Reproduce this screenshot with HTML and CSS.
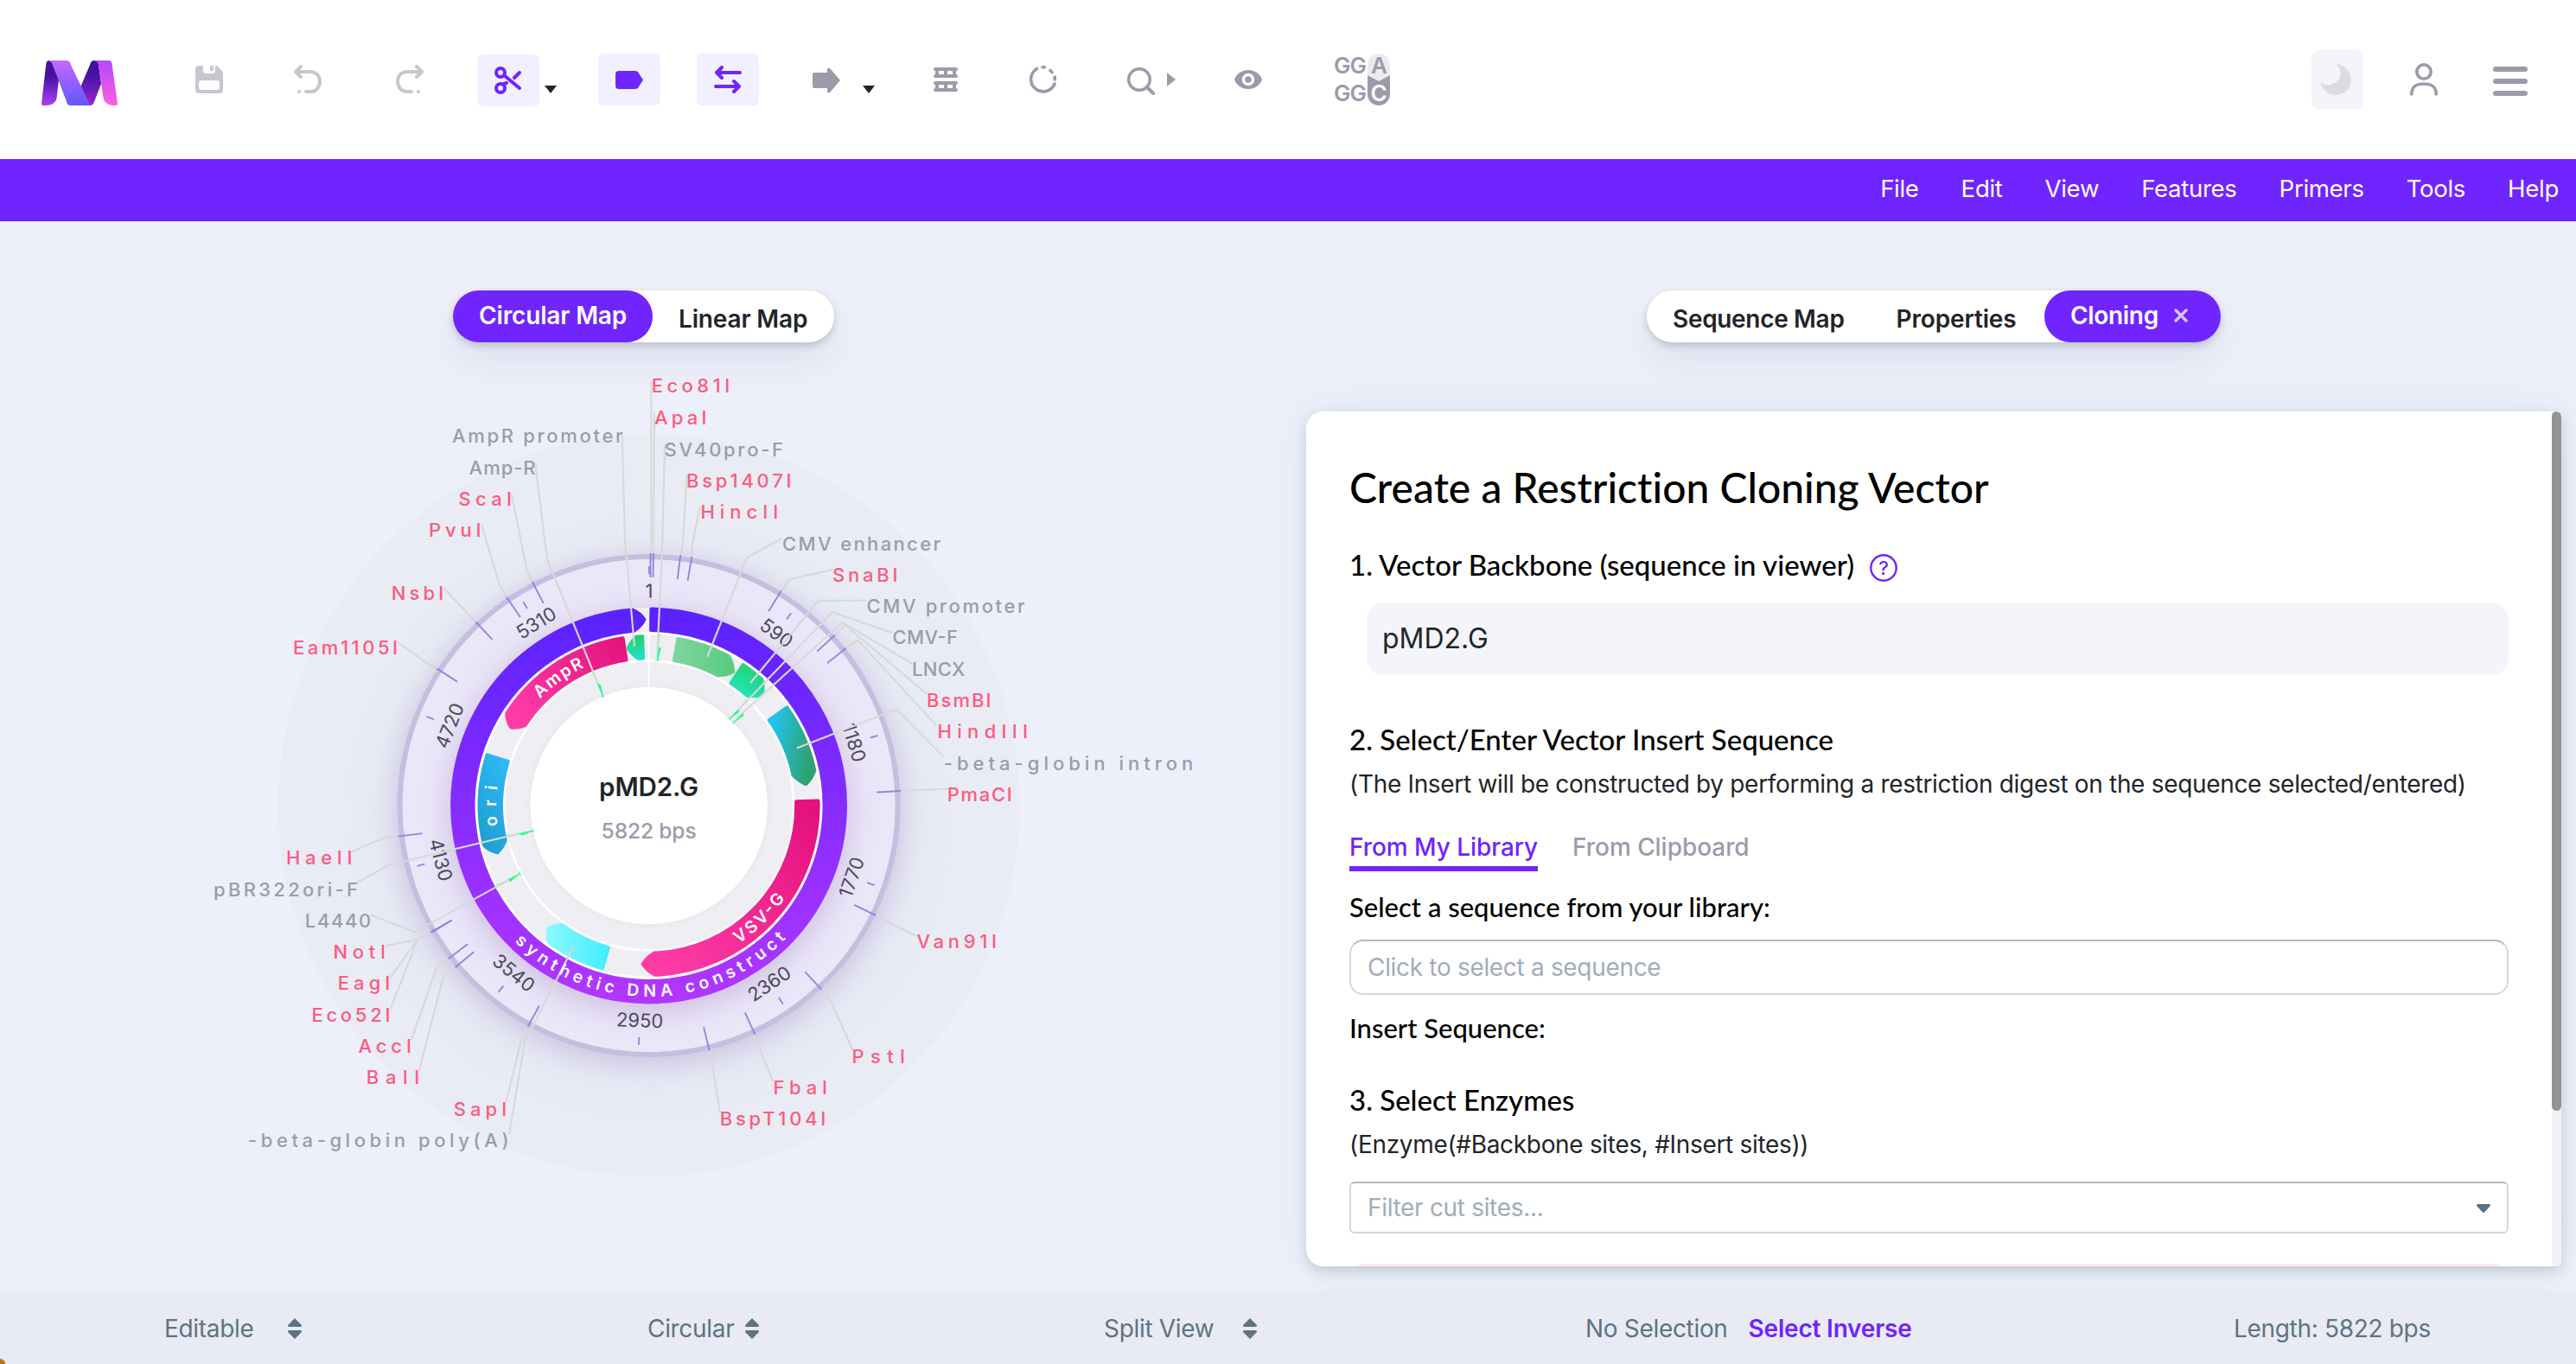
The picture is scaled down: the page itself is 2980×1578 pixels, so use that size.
FILE: index.html
```html
<!DOCTYPE html>
<html lang="en">
<head>
<meta charset="utf-8">
<title>pMD2.G – Plasmid Editor</title>
<link rel="stylesheet" href="styles.css">
</head>
<body>
<header class="toolbar">
  <svg class="logo" width="88" height="52" viewBox="0 0 88 52">
    <defs>
      <linearGradient id="la" x1="0" y1="0" x2="0" y2="1"><stop offset=".35" stop-color="#4611a3"/><stop offset="1" stop-color="#ab42f2"/></linearGradient>
      <linearGradient id="lb" x1="0" y1="0" x2="0" y2="1"><stop offset="0" stop-color="#c768ff"/><stop offset="1" stop-color="#6158ff"/></linearGradient>
      <linearGradient id="lc" x1="0" y1="0" x2="0" y2="1"><stop offset=".3" stop-color="#4611a3"/><stop offset="1" stop-color="#9129cf"/></linearGradient>
      <linearGradient id="ld" x1="0" y1="0" x2="0" y2="1"><stop offset="0" stop-color="#b548fa"/><stop offset="1" stop-color="#ff5fe2"/></linearGradient>
    </defs>
    <path fill="url(#la)" d="M9 0Q5.500 0 5.200 5L0 50Q0 52 2 52H6Q16 51 17.500 44L20 22L12 2Z"/>
    <path fill="url(#lc)" d="M61 0Q57 0 56 5L45 31L52 52H56Q59 52 60.500 49L69 27L66 4Q65 0 61 0Z"/>
    <path fill="url(#lb)" d="M9 0H29Q33 0 34 5L54 47Q55 51 58 52H34Q30 52 29.500 49L13 5Q12 0 9 0Z"/>
    <path fill="url(#ld)" d="M61 0H78Q81 0 81.500 4L88 50Q88 52 86 52H82Q73 51 71.500 43L66 5Q65 0 61 0Z"/>
  </svg>
  <div class="tools">
    <svg class="t-save" width="32" height="32" viewBox="0 0 32 32"><path fill="#c7c7d0" fill-rule="evenodd" d="M4 0H9V6Q9 9 12 9H20Q23 9 23 6V0H25L32 7V28Q32 32 28 32H4Q0 32 0 28V4Q0 0 4 0ZM17 0H21V5Q21 6 19 6Q17 6 17 5ZM7 17Q4 17 4 20V25Q4 28 7 28H25Q28 28 28 25V20Q28 17 25 17Z"/></svg>
    <svg class="t-undo" width="32" height="34" viewBox="0 0 32 34" fill="none" stroke="#c7c7d0" stroke-width="4" stroke-linecap="round" stroke-linejoin="round"><path d="M8 2L2 8L8 14M3 8H19C26 8 30 13 30 19S26 31 20 31H14M6 31V31.010" /></svg>
    <svg class="t-redo" width="32" height="34" viewBox="0 0 32 34" fill="none" stroke="#c7c7d0" stroke-width="4" stroke-linecap="round" stroke-linejoin="round"><path d="M24 2L30 8L24 14M29 8H13C6 8 2 13 2 19S6 31 12 31H18M26 31V31.010"/></svg>
    <span class="tool-on t-cut"><svg width="32" height="32" viewBox="0 0 32 32" fill="none" stroke="#7024fe" stroke-width="4" stroke-linecap="round"><ellipse cx="7" cy="7" rx="5" ry="5"/><ellipse cx="7" cy="25" rx="5" ry="5"/><path d="M11 10L29 25M11 20L14 19M23 13L29 7"/></svg></span>
    <svg class="caret t-caret1" width="14" height="9" viewBox="0 0 14 9"><path fill="#212529" d="M0 0H14L7 9Z"/></svg>
    <span class="tool-on t-label"><svg width="32" height="21" viewBox="0 0 32 21"><path fill="#7024fe" d="M4 0H23Q25 0 26.500 2L32 10.500L26.500 19Q25 21 23 21H4Q0 21 0 17V4Q0 0 4 0Z"/></svg></span>
    <span class="tool-on t-swap"><svg width="32" height="32" viewBox="0 0 32 32" fill="none" stroke="#7024fe" stroke-width="4" stroke-linecap="round" stroke-linejoin="round"><path d="M9 2L3 8L9 14M3 8H30M23 18L29 24L23 30M29 24H2"/></svg></span>
    <svg class="t-arrow" width="32" height="30" viewBox="0 0 32 30"><path fill="#9b9bab" d="M2 6H17V2Q18 0 20 1L32 15L20 29Q18 30 17 28V24H2Q0 24 0 22V8Q0 6 2 6Z"/></svg>
    <svg class="caret t-caret2" width="14" height="9" viewBox="0 0 14 9"><path fill="#212529" d="M0 0H14L7 9Z"/></svg>
    <svg class="t-rows" width="28" height="28" viewBox="0 0 28 28" fill="none" stroke="#9b9bab" stroke-width="4" stroke-linecap="round"><path d="M2 2H26M2 10H26M2 18H26M2 26H26M4 2V10M14 2V10M24 2V10M4 18V26M14 18V26M24 18V26"/></svg>
    <svg class="t-circle" width="32" height="32" viewBox="0 0 32 32" fill="none" stroke="#9b9bab" stroke-width="3.600" stroke-linecap="round"><path d="M9.500 3.500A14.200 14.200 0 1 0 30 21M16 1.800H18.500M25 5.500L27 7.500M30.200 13V16"/></svg>
    <svg class="t-search" width="56" height="32" viewBox="0 0 56 32"><circle cx="14" cy="14" r="12.300" fill="none" stroke="#9b9bab" stroke-width="3.400"/><path d="M23 23L30 30" stroke="#9b9bab" stroke-width="4" stroke-linecap="round"/><path d="M46 6L56 14L46 22Z" fill="#9b9bab"/></svg>
    <svg class="t-eye" width="32" height="22" viewBox="0 0 32 22"><path fill="#9b9bab" d="M16 0C24 0 30 5 32 11C30 17 24 22 16 22S2 17 0 11C2 5 8 0 16 0Z"/><circle cx="16" cy="11" r="5.500" fill="none" stroke="#fff" stroke-width="3.400"/></svg>
    <svg class="t-align" width="68" height="76" viewBox="-2 -8 68 76"><rect x="38" width="26" height="40" rx="13" fill="#ececef"/><path fill="#9b9bab" d="M38 25L51 32L64 25V47A13 13 0 0 1 38 47Z"/><g class="bases"><text x="-1" y="23" textLength="38">GG</text><text x="42" y="23">A</text><text x="-1" y="55" textLength="38">GG</text><text x="41.500" y="55" fill="#fff">C</text></g></svg>
  </div>
  <div class="account">
    <span class="theme"><svg width="36" height="36" viewBox="0 0 36 36"><path fill="#dbdbe3" d="M19 0C28 1 36 9 36 18A18 18 0 0 1 18 36C9 36 2 30 0 20C3 24 8 26 14 23.500C24 20 27 9 19 0Z"/></svg></span>
    <svg width="32" height="38" viewBox="0 0 32 38" fill="none" stroke="#9b9bab" stroke-width="3.600" stroke-linecap="round"><circle cx="16" cy="10" r="8.200"/><path d="M1.800 36C1.800 27 7 24 16 24S30.200 27 30.200 36"/></svg>
    <svg class="burger" width="40" height="34" viewBox="0 0 40 34" fill="#9b9bab"><rect width="40" height="6" rx="3"/><rect y="14" width="40" height="6" rx="3"/><rect y="28" width="40" height="6" rx="3"/></svg>
  </div>
</header>
<nav class="menubar"><span>File</span><span>Edit</span><span>View</span><span>Features</span><span>Primers</span><span>Tools</span><span>Help</span></nav>
<main class="workspace">
  <section class="pane map-pane">
    <div class="tabs tabs-left"><span class="tab active w-circ">Circular Map</span><span class="tab">Linear Map</span></div>
    <svg id="map" class="map" width="1490" height="1076" viewBox="0 416 1490 1076"></svg>
  </section>
  <section class="pane form-pane">
    <div class="tabs tabs-right"><span class="tab">Sequence Map</span><span class="tab">Properties</span><span class="tab active w-clon">Cloning<svg width="16" height="16" viewBox="0 0 16 16" stroke="#d9c4ff" stroke-width="3.400" stroke-linecap="round"><path d="M2 2L14 14M14 2L2 14"/></svg></span></div>
    <div class="card">
      <div class="form">
        <h1>Create a Restriction Cloning Vector</h1>
        <h2 class="backbone">1. Vector Backbone (sequence in viewer)<svg width="32" height="32" viewBox="0 0 32 32"><circle cx="16" cy="16" r="14.700" fill="none" stroke="#7024fe" stroke-width="2.400"/><text x="16" y="24" text-anchor="middle" class="q">?</text></svg></h2>
        <div class="readonly">pMD2.G</div>
        <h2 class="insert">2. Select/Enter Vector Insert Sequence</h2>
        <p>(The Insert will be constructed by performing a restriction digest on the sequence selected/entered)</p>
        <div class="subtabs"><span class="on">From My Library</span><span>From Clipboard</span></div>
        <h3 class="lib">Select a sequence from your library:</h3>
        <div class="input">Click to select a sequence</div>
        <h3 class="ins">Insert Sequence:</h3>
        <h2 class="enz">3. Select Enzymes</h2>
        <p>(Enzyme(#Backbone sites, #Insert sites))</p>
        <div class="input select">Filter cut sites...<svg width="16" height="10" viewBox="0 0 16 10"><path fill="#5c7080" d="M1 0H15Q17 1 15 3L9 9.500Q8 10 7 9.500L1 3Q-1 1 1 0Z"/></svg></div>
        <div class="notice"></div>
      </div>
      <div class="scroll"><div class="thumb"></div></div>
    </div>
  </section>
</main>
<footer class="status">
  <span class="s1">Editable<svg class="sort" width="16" height="24" viewBox="0 0 16 24"><path d="M8 0L15.500 7.500Q17 10 14 10H2Q-1 10 .5 7.500ZM8 24L15.500 16.500Q17 14 14 14H2Q-1 14 .5 16.500Z"/></svg></span>
  <span class="s2">Circular<svg class="sort" width="16" height="24" viewBox="0 0 16 24"><path d="M8 0L15.500 7.500Q17 10 14 10H2Q-1 10 .5 7.500ZM8 24L15.500 16.500Q17 14 14 14H2Q-1 14 .5 16.500Z"/></svg></span>
  <span class="s3">Split View<svg class="sort" width="16" height="24" viewBox="0 0 16 24"><path d="M8 0L15.500 7.500Q17 10 14 10H2Q-1 10 .5 7.500ZM8 24L15.500 16.500Q17 14 14 14H2Q-1 14 .5 16.500Z"/></svg></span>
  <span class="s4">No Selection<b>Select Inverse</b></span>
  <span class="s5">Length: 5822 bps</span>
</footer>
<script src="map.js"></script>
</body>
</html>
```
FILE: styles.css
```css
* { box-sizing: border-box; }
body { margin: 0; width: 2980px; height: 1578px; overflow: hidden; display: flex; flex-direction: column; background: #edf0fa; font: 400 28px/36px Inter, sans-serif; letter-spacing: -.32px; color: #212529; }
svg { display: block; flex: none; letter-spacing: 0; }
h1, h2, h3, p { margin: 0; }

.toolbar { height: 184px; flex: none; background: #fff; display: flex; padding-left: 48px; align-items: flex-start; }
.logo { margin-top: 70px; }
.tools { display: flex; align-items: flex-start; flex: 1; }
.tool-on { width: 72px; height: 60px; border-radius: 6px; background: #f1f0ff; display: flex; align-items: center; justify-content: center; flex: none; }
.t-save { margin: 76px 0 0 90px; }
.t-undo { margin: 75px 0 0 82px; }
.t-redo { margin: 75px 0 0 86px; }
.t-cut { margin: 63px 0 0 62px; }
.t-caret1 { margin: 99px 0 0 6px; }
.t-label { margin: 62px 0 0 48px; }
.t-swap { margin: 62px 0 0 42px; }
.t-arrow { margin: 78px 0 0 62px; }
.t-caret2 { margin: 99px 0 0 26px; }
.t-rows { margin: 78px 0 0 68px; }
.t-circle { margin: 76px 0 0 82px; }
.t-search { margin: 78px 0 0 82px; }
.t-eye { margin: 81px 0 0 68px; }
.t-align { margin: 54px 0 0 82px; }
.bases { font: 600 26px/30px Inter, sans-serif; fill: #9b9bab; }
.account { display: flex; align-items: center; padding: 57px 56px 0 0; height: 127px; }
.theme { width: 60px; height: 70px; border-radius: 10px; background: #f4f5fb; display: flex; align-items: center; padding-left: 10px; margin-right: 54px; }
.burger { margin: 4px 0 0 64px; }

.menubar { height: 72px; flex: none; background: #7024fe; color: #fff; display: flex; justify-content: flex-end; gap: 49px; padding: 16px 20px 0 0; font-size: 27.600px; }

.workspace { height: 1236px; flex: none; display: flex; }
.pane { width: 1490px; padding-top: 80px; }
.tabs { display: flex; height: 60px; border-radius: 30px; background: #fff; box-shadow: 0 4px 8px rgba(40, 45, 60, .2), 0 22px 44px rgba(40, 45, 80, .07); font-weight: 600; }
.tabs-left { width: 441px; margin-left: 524px; letter-spacing: -.15px; }
.tabs-right { width: 664px; margin-left: 415px; }
.tab { padding: 15px 30px 0; white-space: nowrap; }
.tab + .tab:not(.active) { letter-spacing: -.15px; }
.tab.active { background: #7024fe; color: #fff; border-radius: 30px; padding-top: 11px; display: flex; gap: 18px; flex: none; }
.tab.active svg { margin-top: 10px; }
.w-circ { width: 231px; }
.w-clon { width: 204px; margin-left: auto; }
.map { margin-top: 20px; }

.card { width: 1452px; height: 989px; margin: 80px 0 0 21px; background: #fff; border-radius: 20px 6px 6px 20px; display: flex; box-shadow: 0 6px 14px rgba(40, 45, 70, .17), 0 0 50px rgba(60, 70, 140, .07); overflow: hidden; }
.form { flex: 1; padding: 58px 50px 0; color: #000; }
h1 { font: 500 48px/60px Lato, sans-serif; }
h2 { font: 500 33px/40px Lato, sans-serif; }
h3 { font: 500 31px/36px Lato, sans-serif; }
h1, h2, h3 { letter-spacing: 0; font-variant-ligatures: none; white-space: nowrap; }
p { margin-top: 14px; color: #212529; white-space: nowrap; }
.backbone { margin-top: 39px; display: flex; gap: 18px; }
.backbone svg { margin-top: 8px; }
.q { font: 500 22px Inter, sans-serif; fill: #7024fe; }
.readonly { margin: 24px 0 0 20px; height: 84px; border-radius: 20px; background: #f4f5fb; color: #212529; font-size: 32px; letter-spacing: 0; line-height: 83px; padding-left: 18px; }
.insert { margin-top: 54px; }
.subtabs { display: flex; gap: 40px; margin-top: 37px; font-weight: 500; color: #9b9bab; letter-spacing: -.05px; }
.subtabs span { height: 46px; }
.subtabs .on { color: #7024fe; border-bottom: 6px solid #7024fe; }
.lib { margin-top: 23px; }
.input { margin-top: 20px; height: 64px; border: 2px solid #d6d6d9; border-top-color: #b8b8ba; border-radius: 16px; padding: 12px 19px; color: #a1adb8; display: flex; justify-content: space-between; }
.ins { margin-top: 20px; }
.enz { margin-top: 45px; }
.select { margin-top: 25px; height: 60px; border-radius: 6px; padding-top: 10px; }
.select svg { margin-top: 14px; }
.notice { height: 10px; margin: 35px 9px 0; background: #fbeef0; border-radius: 6px; }
.scroll { width: 11px; background: #f2f3f9; }
.thumb { height: 809px; background: #949494; border-radius: 6px; }

.status { height: 86px; flex: none; display: grid; grid-template-columns: 559px 528px 557px 750px 1fr; padding: 27px 0 0 190px; color: #5f7382; background: radial-gradient(circle 8px at 0 86px, #b8741f 5px, transparent 7px), #e8ebf4; }
.status span { display: flex; white-space: nowrap; }
.status b { font-weight: 600; color: #7024fe; margin-left: 24px; letter-spacing: -.2px; }
.sort { fill: #5f7382; margin-top: 6px; }
.s1 .sort { margin-left: 40px; }
.s2 .sort { margin-left: 13px; }
.s3 .sort { margin-left: 34px; }

.site { font: 550 22px Inter, sans-serif; fill: #ff5a7d; }
.feat { fill: #9a9cab; }
.axis { font: 400 22px Inter, sans-serif; fill: #4b4b57; text-anchor: middle; }
.on-ring { font: 600 19.500px Inter, sans-serif; fill: #fff; }
.name { font: 600 29.500px Inter, sans-serif; fill: #212529; text-anchor: middle; }
.size { font: 500 24.500px Inter, sans-serif; fill: #9b9bab; text-anchor: middle; }
.leader { fill: none; stroke: #d8d8d8; stroke-width: 2.100; }
.tick { stroke: #8f87e0; stroke-width: 1.900; }
```
FILE: map.js
```js
// Circular plasmid map: angles are degrees clockwise from the top.
const CX = 750.6, CY = 932;
const pt = (a, r) => {
  const t = a * Math.PI / 180;
  return [(CX + r * Math.sin(t)).toFixed(2), (CY - r * Math.cos(t)).toFixed(2)];
};
const arc = (a0, a1, r) =>
  `A${r} ${r} 0 ${Math.abs(a1 - a0) > 180 ? 1 : 0} ${a1 > a0 ? 1 : 0} ${pt(a1, r)}`;
let out = '';

const grad = (id, x1, y1, x2, y2, c1, c2) =>
  `<linearGradient id="${id}" x1="${x1}" y1="${y1}" x2="${x2}" y2="${y2}"><stop stop-color="${c1}"/><stop offset="1" stop-color="${c2}"/></linearGradient>`;
out += '<defs>' +
  grad('g-ring', 0, 0, 0, 1, '#5a22ff', '#b236ff') +
  grad('g-pink', .9, 0, .1, 1, '#e3127e', '#ff3ca6') +
  grad('g-amp', 1, 0, 0, .8, '#e3127e', '#ff3ca6') +
  grad('g-prom', 0, 0, 0, 1, '#22d070', '#24e2c4') +
  grad('g-enh', 0, .5, 1, .5, '#7dd69c', '#5acb80') +
  grad('g-cmv', .8, 0, .2, 1, '#22d06a', '#24e6c4') +
  grad('g-int', 0, 0, 1, .3, '#20c8ff', '#2fa272') +
  grad('g-cyan', 0, .5, 1, .5, '#8af8ff', '#42eeff') +
  grad('g-ori', .9, 0, .4, 1, '#30baf9', '#1ea0d2') +
  '<filter id="blur" x="-20%" y="-20%" width="140%" height="140%"><feGaussianBlur stdDeviation="16"/></filter>' +
  '<filter id="wide" x="-30%" y="-30%" width="160%" height="160%"><feGaussianBlur stdDeviation="30"/></filter>' +
  '<clipPath id="disc"><circle cx="750.6" cy="932" r="286"/></clipPath>' +
  '<filter id="soft" x="-20%" y="-20%" width="140%" height="140%"><feGaussianBlur stdDeviation="4"/></filter></defs>';

const circle = (r, extra, dy = 0) => `<circle cx="${CX}" cy="${CY + dy}" r="${r}" ${extra}/>`;
out += circle(429, 'fill="#e9ecf5"');
out += circle(296, 'fill="#c9c2e6" opacity=".3" filter="url(#wide)"', 14);
out += circle(290, 'fill="#b7a9d2" opacity=".6" filter="url(#blur)"', 6);
out += circle(288, 'fill="#ebe7f9" stroke="#c6bddf" stroke-width="6"');
out += '<g clip-path="url(#disc)">' + circle(233, 'fill="#bda8d4" opacity=".6" filter="url(#blur)"', 8) + '</g>';
out += circle(229, 'fill="#f0eff3"');
out += circle(201, 'fill="#fff"');

// Background tracks
const band = (a0, a1, r0, r1, fill) =>
  `<path fill="${fill}" stroke="${fill}" stroke-width="4" stroke-linejoin="round" d="M${pt(a0, r1)}${arc(a0, a1, r1)}L${pt(a1, r0)}${arc(a1, a0, r0)}Z"/>`;
out += band(.9, 359.1, 170.600, 196, '#efeef3');
out += band(1.1, 358.9, 139, 164, '#efeef3');
out += circle(137, 'fill="#9a92a8" opacity=".12" filter="url(#soft)"');
out += circle(137, 'fill="#fff"');

// Arrow-shaped features: tail angle, tip angle, radii, head length, fill, edge inset of the head's curve
const arrow = (tail, tip, r0, r1, head, fill, inset = 7) => {
  const dir = tip > tail ? 1 : -1, m = (r0 + r1) / 2, s = tip - dir * head;
  const t = tail + dir * .6;
  return `<path fill="${fill}" stroke="${fill}" stroke-width="4" stroke-linejoin="round" d="M${pt(t, r1 - 2)}${arc(t, s, r1 - 2)}Q${pt(tip - dir * head * .45, r1 - inset)} ${pt(tip - dir * .8, m)}Q${pt(tip - dir * head * .45, r0 + inset)} ${pt(s, r0 + 2)}${arc(s, t, r0 + 2)}Z"/>`;
};
out += arrow(.1, 359.400, 201, 229.400, 4.300, 'url(#g-ring)', 6.500);
out += arrow(351.800, 298.800, 168.600, 198, 4.200, 'url(#g-amp)');
out += arrow(358.400, 351.700, 168.600, 198, 4.200, 'url(#g-prom)', 8);
out += arrow(9.300, 33, 168.600, 198, 5, 'url(#g-enh)');
out += arrow(33.200, 46.300, 168.600, 198, 4.500, 'url(#g-cmv)');
out += arrow(54, 83, 168.600, 198, 5, 'url(#g-int)');
out += arrow(87.800, 183, 168.600, 198, 5.200, 'url(#g-pink)');
out += arrow(195.300, 220, 168.600, 198, 4, 'url(#g-cyan)');
out += arrow(288, 252, 168.600, 198, 4.500, 'url(#g-ori)');

// Primers
[[3.400, 168.600, 198, 1], [337.200, 137, 166, 1], [42.900, 137, 166, 1], [45.500, 137, 166, 1], [257.800, 137, 166, -1], [242.200, 168.600, 198, -1]].forEach(([a, r0, r1, d]) => {
  out += `<path fill="#24ff88" stroke="#24ff88" stroke-width="1" d="M${pt(a, r1)}L${pt(a, r0)}L${pt(a + d * .9, r0 + 14)}L${pt(a, r0 + 15)}M${pt(a - .7, r1)}L${pt(a + .7, r1)}M${pt(a - .9, r0)}L${pt(a + .9, r0)}"/>`;
});

// Axis
[1, 590, 1180, 1770, 2360, 2950, 3540, 4130, 4720, 5310].forEach(n => {
  const a = n / 5822 * 360, flip = a > 90 && a < 270;
  out += `<path class="tick" d="M${pt(a, 268)}L${pt(a, 277)}"/>`;
  const [x, y] = pt(a, flip ? 256.500 : 240.500);
  out += `<text class="axis" transform="translate(${x} ${y}) rotate(${flip ? a - 180 : a})">${n}</text>`;
});

// Labels: text, x, baseline, width, leader anchor, elbow, then cut angle or inner point
const sites = [
  ['Eco81I', 754.7, 454.3, 89, [753.4, 441], [753.4, 630], .4],
  ['ApaI', 758, 490.7, 59, [757, 477], [756, 630], 1.05],
  ['Bsp1407I', 795, 563.7, 120, [794.5, 550], [790, 626.700], 7.2],
  ['HincII', 811.4, 600, 88.400, [809.6, 586], [801, 630], 9.8],
  ['SnaBI', 964, 673, 74, [962.4, 659.3], [913.3, 670.3], 31.65],
  ['BsmBI', 1073, 818, 73, [1072.2, 803], [977.6, 723], 47.5],
  ['HindIII', 1085.6, 854, 103, [1083.4, 839.4], [992.3, 740.6], 51.4],
  ['PmaCI', 1096.8, 926.5, 73.500, [1096.3, 912.8], [1060, 914], 86.65],
  ['Van91I', 1061.5, 1097, 91, [1060, 1083], [1030, 1068], 115.8],
  ['PstI', 986.5, 1229.7, 60, [986.5, 1215], [961, 1157.7], 136.8],
  ['FbaI', 895.4, 1266, 61, [894.5, 1251.7], [872, 1197], 155.1],
  ['BspT104I', 833.8, 1301.7, 121, [832.9, 1287.7], [821, 1214], 166.1],
  ['SapI', 525.7, 1290.7, 60, [585.5, 1275], [603, 1203.3], 208.7],
  ['BalI', 424.8, 1253.7, 60, [484.6, 1239.3], [513.2, 1128.7], 230.1],
  ['AccI', 415.4, 1217.7, 60, [475.7, 1203.3], [505.2, 1119.3], 232.6],
  ['Eco52I', 361.4, 1181.7, 89.500, [451.6, 1167.3], [483.3, 1086.7], 239.8],
  ['EagI', 391.8, 1144.7, 59, [451.6, 1130.7], [483.3, 1086.7], 239.8],
  ['NotI', 386.4, 1108.7, 59, [445.8, 1094.3], [483.3, 1086.7], 239.8],
  ['HaeII', 332, 999.7, 75, [407, 985.3], [445.4, 968.7], 263],
  ['Eam1105I', 340, 756.7, 119.500, [460.5, 743.3], [497, 769], 302.9],
  ['NsbI', 453.8, 693.7, 59, [513.2, 680], [545, 714], 316.7],
  ['PvuI', 497, 620.7, 59, [557, 607.3], [578, 676.7], 325.7],
  ['ScaI', 531.5, 584.7, 60, [591.8, 571.7], [609.2, 658.3], 332.5]
];
const feats = [
  ['SV40pro-F', 769.5, 527.5, 136, [769, 514], [766, 638], [760.5, 753]],
  ['CMV enhancer', 906, 637, 181.500, [904.8, 623], [864, 645], [818.2, 760]],
  ['CMV promoter', 1003.5, 709, 181.500, [1002.6, 694.8], [946.8, 694.8], [868.2, 790]],
  ['CMV-F', 1033.4, 744.7, 74, [1032.5, 732], [962.9, 708.2], [853.7, 821.7]],
  ['LNCX', 1056, 781.6, 60, [1055.3, 767.8], [974.5, 720], [860, 824]],
  ['-beta-globin intron', 1092.8, 890.7, 287, [1091.9, 876], [1037.4, 820.5], [921.8, 865.6]],
  ['-beta-globin poly(A)', 288, 1326.7, 300, [589, 1312.7], [607, 1205], [664, 1094]],
  ['L4440', 353.8, 1072.7, 75, [428.4, 1058.3], [479.7, 1078.3], [588, 1018.400]],
  ['pBR322ori-F', 248, 1036.7, 165.500, [413.2, 1021], [449.8, 1000.7], [598, 965]],
  ['Amp-R', 543.6, 548.7, 75.500, [619, 535], [632.9, 646.7], [691.5, 790]],
  ['AmpR promoter', 524, 511.7, 196, [719.5, 498.7], [723, 625], [734, 748]]
];
const label = (s, cls) =>
  `<text class="site${cls}" x="${s[1] - 1}" y="${s[2]}" textLength="${s[3] + 1.5}">${s[0]}</text>`;
sites.forEach(s => {
  out += `<path class="leader" d="M${s[4]}L${s[5]}L${pt(s[6], 291)}"/><path class="tick" d="M${pt(s[6], 264)}L${pt(s[6], 292)}"/>` + label(s, '');
});
feats.forEach(s => {
  out += `<path class="leader" d="M${s[4]}L${s[5]}L${s[6]}"/>` + label(s, ' feat');
});

// Names that follow the ring
const ringText = (id, text, a0, a1, r, len) =>
  `<path id="${id}" fill="none" d="M${pt(a0, r)}${arc(a0, a1 + (a1 > a0 ? 6 : -6), r)}"/><text class="on-ring"><textPath href="#${id}" textLength="${len}">${text}</textPath></text>`;
out += ringText('p1', 'synthetic DNA construct', 224.6, 133, 221, 349);
out += ringText('p2', 'VSV-G', 147, 122, 190.5, 76);
out += ringText('p3', 'AmpR', 314.5, 336, 176.5, 63);
out += ringText('p4', 'ori', 262.4, 280, 176.5, 46);

out += `<text class="name" x="750.6" y="921.3" textLength="115">pMD2.G</text><text class="size" x="750.6" y="969.5" textLength="110">5822 bps</text>`;
document.getElementById('map').innerHTML = out;
```
